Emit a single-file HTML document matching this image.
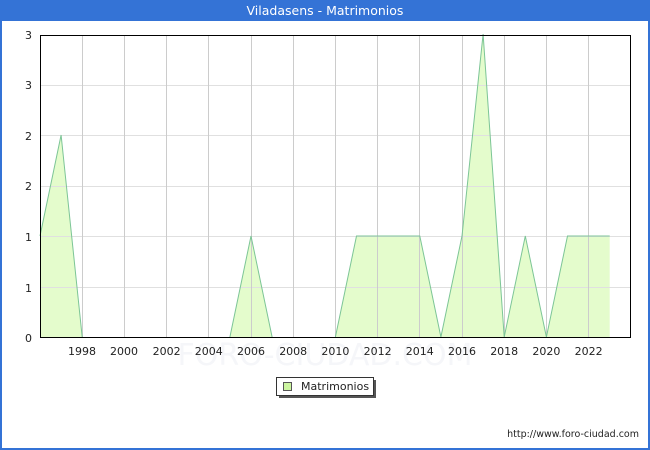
<!DOCTYPE html>
<html><head><meta charset="utf-8"><style>
html,body{margin:0;padding:0;width:650px;height:450px;overflow:hidden;background:#fff}
</style></head><body>
<svg width="650" height="450" xmlns="http://www.w3.org/2000/svg" font-family="DejaVu Sans, sans-serif">
<rect x="0" y="0" width="650" height="450" fill="#3473d6"/>
<rect x="2" y="21" width="646" height="427" fill="#fff"/>
<text x="325" y="15" fill="#fff" font-size="12.5" text-anchor="middle">Viladasens - Matrimonios</text>
<text x="325" y="365" fill="#f5f6f9" font-size="30" text-anchor="middle">FORO-CIUDAD.COM</text>
<polygon fill="#e4fccc" stroke="none" points="40,236 61.1,135 82.2,337 229.9,337 251,236 272.1,337 335.4,337 356.5,236 419.8,236 440.9,337 462,236 483.1,34 504.2,337 525.3,236 546.4,337 567.5,236 609.7,236 609.7,337 40,337"/>
<g stroke="#e0e0e0" stroke-width="1">
<line x1="40" y1="85.5" x2="630" y2="85.5"/><line x1="40" y1="135.5" x2="630" y2="135.5"/>
<line x1="40" y1="186.5" x2="630" y2="186.5"/><line x1="40" y1="236.5" x2="630" y2="236.5"/>
<line x1="40" y1="287.5" x2="630" y2="287.5"/>
</g>
<g stroke="#cccccc" stroke-width="1">
<line x1="82.5" y1="35" x2="82.5" y2="338"/><line x1="124.5" y1="35" x2="124.5" y2="338"/>
<line x1="166.5" y1="35" x2="166.5" y2="338"/><line x1="208.5" y1="35" x2="208.5" y2="338"/>
<line x1="251.5" y1="35" x2="251.5" y2="338"/><line x1="293.5" y1="35" x2="293.5" y2="338"/>
<line x1="335.5" y1="35" x2="335.5" y2="338"/><line x1="377.5" y1="35" x2="377.5" y2="338"/>
<line x1="419.5" y1="35" x2="419.5" y2="338"/><line x1="462.5" y1="35" x2="462.5" y2="338"/>
<line x1="504.5" y1="35" x2="504.5" y2="338"/><line x1="546.5" y1="35" x2="546.5" y2="338"/>
<line x1="588.5" y1="35" x2="588.5" y2="338"/>
</g>
<polyline fill="none" stroke="#7cc596" stroke-width="1" points="40,236 61.1,135 82.2,337"/>
<polyline fill="none" stroke="#7cc596" stroke-width="1" points="229.9,337 251,236 272.1,337"/>
<polyline fill="none" stroke="#7cc596" stroke-width="1" points="335.4,337 356.5,236 419.8,236 440.9,337 462,236 483.1,34 504.2,337 525.3,236 546.4,337 567.5,236 609.7,236"/>
<rect x="40.5" y="35.5" width="590" height="302" fill="none" stroke="#000" stroke-width="1"/>
<g font-size="11" fill="#222" text-anchor="end">
<text x="32" y="39">3</text><text x="32" y="89">3</text><text x="32" y="140">2</text>
<text x="32" y="190">2</text><text x="32" y="241">1</text><text x="32" y="292">1</text><text x="32" y="342">0</text>
</g>
<g font-size="11" fill="#222" text-anchor="middle">
<text x="82" y="355">1998</text><text x="124" y="355">2000</text><text x="166.6" y="355">2002</text>
<text x="208.8" y="355">2004</text><text x="251" y="355">2006</text><text x="293.2" y="355">2008</text>
<text x="335.4" y="355">2010</text><text x="377.6" y="355">2012</text><text x="419.8" y="355">2014</text>
<text x="462" y="355">2016</text><text x="504.2" y="355">2018</text><text x="546.4" y="355">2020</text>
<text x="588.6" y="355">2022</text>
</g>
<rect x="279" y="380" width="97" height="18" fill="#555"/>
<rect x="276.5" y="377.5" width="97" height="18" fill="#fff" stroke="#333"/>
<rect x="283.5" y="382.5" width="8" height="8" fill="#ccf5a0" stroke="#555"/>
<text x="301" y="390" font-size="11" fill="#222">Matrimonios</text>
<text x="639" y="437" font-size="9.5" fill="#222" text-anchor="end">http://www.foro-ciudad.com</text>
</svg>
</body></html>
